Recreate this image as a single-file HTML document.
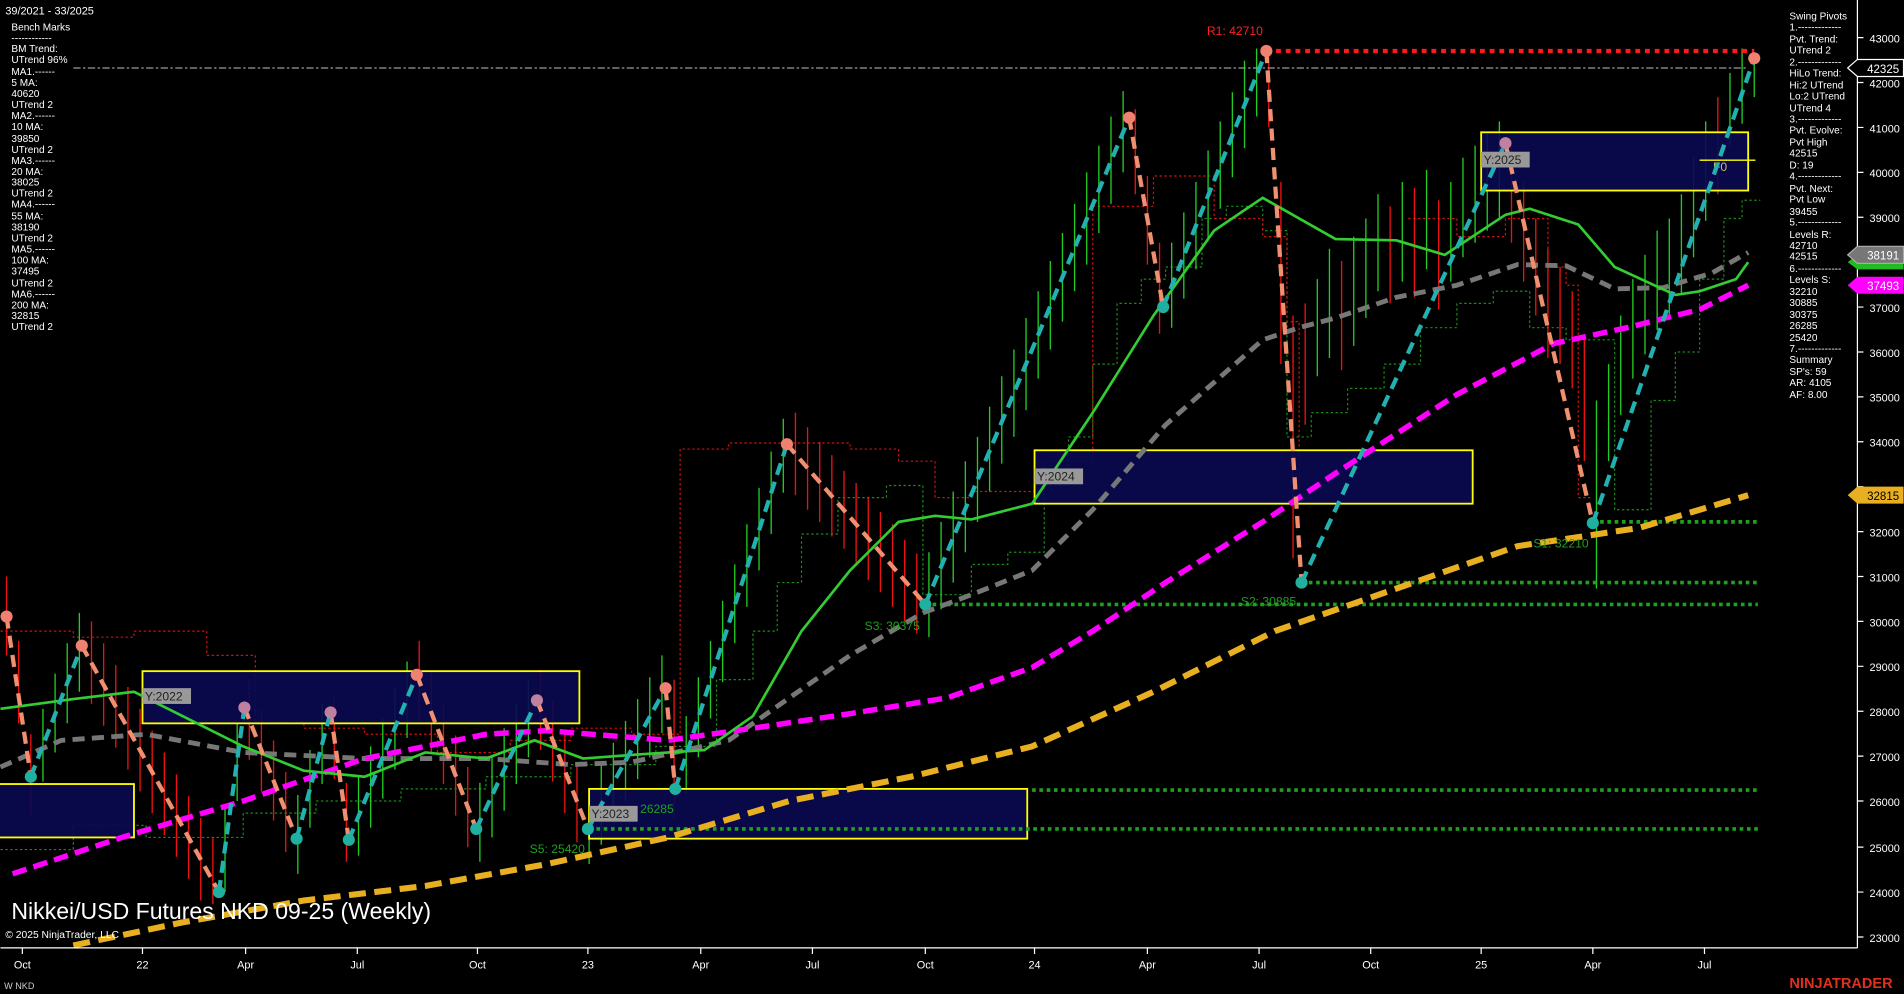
<!DOCTYPE html>
<html><head><meta charset="utf-8"><style>
html,body{margin:0;padding:0;background:#000;width:1904px;height:994px;overflow:hidden}
svg{display:block}
text{font-family:"Liberation Sans",Arial,sans-serif}
</style></head><body>
<svg width="1904" height="994" viewBox="0 0 1568 819" xmlns="http://www.w3.org/2000/svg">
<rect width="1568" height="819" fill="#000"/>
<!-- trailing stops -->
<g fill="none" stroke-width="1" stroke-dasharray="2 2">
<path d="M0 700 H60 V680 H120 V690 H200 V670 H260 V660 H330 V650 H400 V640 H470 V630 H540 V615 H590 V560 H620 V520 H640 V480 H660 V440 H690 V410 H730 V400 H760 V490 H800 V465 H830 V455 H860 V400 H880 V360 H900 V300 H920 V250 H940 V230 H960 V220 H990 V180 H1010 V170 H1040 V190 H1060 V360 H1080 V340 H1110 V320 H1140 V300 H1170 V270 H1200 V250 H1230 V240 H1260 V270 H1290 V280 H1330 V420 H1360 V330 H1380 V290 H1400 V230 H1420 V180 H1435 V165 H1450" stroke="#1a8a1a"/>
<path d="M0 520 H60 V525 H110 V520 H170 V540 H210 V595 H250 V600 H300 V605 H360 V620 H420 V610 H470 V600 H520 V605 H560 V370 H600 V365 H700 V370 H740 V380 H770 V410 H800 V405 H860 V380 H900 V170 H950 V145 H1000 V180 H1040 V195 H1060 V265 H1070 V410 H1080 V410 M1160 180 H1200 V195 H1240 V180 H1275 V220 H1290 V235 H1300 V410 H1310" stroke="#cc1111"/>
</g>
<!-- bars -->
<path stroke="#22cc22" stroke-width="1.1" fill="none" d="M35 584V644 M45 555V620 M55 530V596 M65 505V570 M185 665V735 M195 595V660 M245 655V720 M255 618V682 M265 580V646 M295 640V705 M305 615V682 M315 592V658 M325 566V634 M335 545V608 M395 645V710 M405 622V690 M415 600V668 M425 580V646 M435 560V624 M485 650V712 M495 630V696 M505 612V678 M515 594V660 M525 576V642 M535 558V624 M545 540V604 M565 590V654 M575 558V624 M585 528V592 M595 495V562 M605 465V530 M615 432V500 M625 402V470 M635 372V440 M645 345V406 M765 455V525 M775 430V502 M785 405V480 M795 380V455 M805 360V430 M815 335V405 M825 310V382 M835 288V360 M845 262V338 M855 240V312 M865 215V288 M875 192V265 M885 168V240 M895 142V218 M905 120V192 M915 96V168 M925 75V142 M965 200V270 M975 175V246 M985 150V222 M995 124V198 M1005 100V172 M1015 76V146 M1025 50V122 M1035 40V96 M1085 230V310 M1095 205V295 M1115 195V285 M1125 180V262 M1135 160V240 M1155 150V232 M1175 140V222 M1195 150V232 M1205 130V212 M1215 120V200 M1225 110V190 M1235 100V180 M1315 330V485 M1325 300V380 M1335 260V342 M1345 230V312 M1355 210V292 M1365 190V272 M1375 180V262 M1385 160V242 M1395 130V212 M1405 100V182 M1425 60V120 M1435 40V102 M1445 50V80"/>
<path stroke="#ee1111" stroke-width="1.1" fill="none" d="M5 475V540 M15 528V596 M25 605V672 M75 512V580 M85 530V598 M95 548V616 M105 566V634 M115 584V652 M125 602V670 M135 620V688 M145 638V706 M155 656V724 M165 674V742 M175 690V745 M205 560V626 M215 585V652 M225 610V676 M235 636V702 M275 575V642 M285 645V710 M345 528V594 M355 554V620 M365 580V646 M375 606V672 M385 632V698 M445 552V618 M455 578V644 M465 602V670 M475 628V694 M555 560V675 M655 340V408 M665 352V420 M675 364V430 M685 375V442 M695 388V452 M705 398V466 M715 410V478 M725 422V488 M735 432V500 M745 445V512 M755 456V522 M935 90V160 M945 145V218 M955 200V275 M1045 40V105 M1055 150V300 M1065 260V460 M1075 250V350 M1105 215V305 M1145 170V250 M1165 155V245 M1185 165V255 M1245 120V200 M1255 150V232 M1265 180V260 M1275 205V295 M1285 220V300 M1295 240V320 M1305 280V380 M1415 80V160"/>
<!-- boxes -->
<g fill="#0a0a50" fill-opacity="0.92" stroke="#ffff00" stroke-width="1.5">
<rect x="-2" y="646" width="112" height="44"/>
<rect x="117" y="553" width="360" height="43"/>
<rect x="485" y="650" width="361" height="41"/>
<rect x="852" y="371" width="361" height="44"/>
<rect x="1220" y="109" width="220" height="48"/>
</g>
<line x1="1400" y1="132" x2="1446" y2="132" stroke="#ffff00" stroke-width="1.2"/>
<text x="1411" y="141" fill="#c8c060" font-size="10">F0</text>
<!-- levels -->
<g stroke="#1fa01f" stroke-width="3" stroke-dasharray="3 3">
<line x1="1312" y1="430" x2="1448" y2="430"/>
<line x1="1072" y1="480" x2="1448" y2="480"/>
<line x1="762" y1="498" x2="1448" y2="498"/>
<line x1="850" y1="651" x2="1448" y2="651"/>
<line x1="485" y1="683" x2="1448" y2="683"/>
</g>
<line x1="1043" y1="42" x2="1445" y2="42" stroke="#ff1a1a" stroke-width="3.5" stroke-dasharray="4 4"/>
<line x1="60" y1="56" x2="1440" y2="56" stroke="#999" stroke-width="1" stroke-dasharray="6 2 2 2"/>
<!-- MAs -->
<g fill="none">
<polyline stroke="#777" stroke-width="4" stroke-dasharray="10 6" points="0,632 50,610 120,605 200,620 300,625 400,625 470,630 520,628 600,610 650,575 700,540 760,505 800,490 850,470 900,420 960,350 1040,280 1070,270 1100,262 1150,245 1200,235 1250,218 1290,219 1330,238 1370,237 1410,225 1440,208"/>
<polyline stroke="#ff00ff" stroke-width="4.5" stroke-dasharray="12 6" points="10,720 100,690 200,660 300,625 400,605 450,602 550,610 620,600 700,588 780,575 850,550 900,520 960,480 1040,430 1100,390 1200,325 1280,283 1340,270 1400,255 1440,235"/>
<polyline stroke="#e8b020" stroke-width="5" stroke-dasharray="14 7" points="60,779 150,760 250,742 350,730 450,712 550,690 650,660 750,640 850,615 950,570 1050,520 1150,485 1250,450 1350,435 1440,408"/>
<polyline stroke="#33cc33" stroke-width="2.2" points="0,584 60,576 110,570 150,590 200,615 250,635 300,640 350,620 400,625 440,610 480,625 520,622 580,618 620,590 660,520 700,470 740,430 770,425 800,428 850,415 900,340 950,260 1000,190 1040,163 1070,180 1100,197 1150,198 1190,210 1240,177 1260,172 1300,185 1330,220 1380,243 1400,240 1430,230 1440,216"/>
</g>
<!-- swing lines -->
<g stroke-width="3.5" stroke-dasharray="10 6">
<g stroke="#f09070">
<line x1="5" y1="508" x2="25" y2="640"/><line x1="67" y1="532" x2="180" y2="735"/><line x1="201" y1="583" x2="244" y2="691"/><line x1="272" y1="587" x2="287" y2="692"/><line x1="343" y1="556" x2="392" y2="683"/><line x1="442" y1="577" x2="484" y2="683"/><line x1="548" y1="567" x2="556" y2="650"/><line x1="648" y1="366" x2="762" y2="498"/><line x1="930" y1="97" x2="958" y2="253"/><line x1="1043" y1="42" x2="1072" y2="480"/><line x1="1240" y1="118" x2="1312" y2="431"/>
</g>
<g stroke="#22b0b0">
<line x1="25" y1="640" x2="67" y2="532"/><line x1="180" y1="735" x2="201" y2="583"/><line x1="244" y1="691" x2="272" y2="587"/><line x1="287" y1="692" x2="343" y2="556"/><line x1="392" y1="683" x2="442" y2="577"/><line x1="484" y1="683" x2="548" y2="567"/><line x1="556" y1="650" x2="648" y2="366"/><line x1="762" y1="498" x2="930" y2="97"/><line x1="958" y1="253" x2="1043" y2="42"/><line x1="1072" y1="480" x2="1240" y2="118"/><line x1="1312" y1="431" x2="1445" y2="48"/>
</g>
</g>
<g fill="#f08070"><circle cx="5" cy="508" r="5"/><circle cx="67" cy="532" r="5"/><circle cx="548" cy="567" r="5"/><circle cx="648" cy="366" r="5"/><circle cx="930" cy="97" r="5"/><circle cx="1043" cy="42" r="5"/><circle cx="1445" cy="48" r="5"/><circle cx="343" cy="556" r="5"/></g>
<g fill="#c080a0"><circle cx="201" cy="583" r="5"/><circle cx="272" cy="587" r="5"/><circle cx="442" cy="577" r="5"/><circle cx="1240" cy="118" r="5"/></g>
<g fill="#20b0a0"><circle cx="25" cy="640" r="5"/><circle cx="180" cy="735" r="5"/><circle cx="244" cy="691" r="5"/><circle cx="287" cy="692" r="5"/><circle cx="392" cy="683" r="5"/><circle cx="484" cy="683" r="5"/><circle cx="556" cy="650" r="5"/><circle cx="762" cy="498" r="5"/><circle cx="958" cy="253" r="5"/><circle cx="1072" cy="480" r="5"/><circle cx="1312" cy="431" r="5"/></g>
<g font-size="10">
<text x="994" y="29" fill="#ff2020">R1: 42710</text>
<text x="712" y="519" fill="#1fa01f">S3: 30375</text>
<text x="1022" y="499" fill="#1fa01f">S2: 30885</text>
<text x="1263" y="451" fill="#1fa01f">S1: 32210</text>
<text x="436" y="703" fill="#1fa01f">S5: 25420</text>
<text x="527" y="670" fill="#1fa01f">26285</text>
</g>
<g font-size="10" fill="#222" font-family="Liberation Mono">
<rect x="117" y="567" width="40" height="13" fill="#999"/><text x="119" y="577">Y:2022</text>
<rect x="485" y="664" width="40" height="13" fill="#999"/><text x="487" y="674">Y:2023</text>
<rect x="852" y="386" width="40" height="13" fill="#999"/><text x="854" y="396">Y:2024</text>
<rect x="1220" y="125" width="40" height="13" fill="#999"/><text x="1222" y="135">Y:2025</text>
</g>
<!-- left text -->
<text x="4" y="12" fill="#fff" font-size="9">39/2021 - 33/2025</text>
<g fill="#fff" font-size="8.3">
<text x="9" y="25">Bench Marks</text><text x="9" y="34">------------</text><text x="9" y="43">BM Trend:</text><text x="9" y="52">UTrend 96%</text><text x="9" y="62">MA1.------</text><text x="9" y="71">5 MA:</text><text x="9" y="80">40620</text><text x="9" y="89">UTrend 2</text><text x="9" y="98">MA2.------</text><text x="9" y="107">10 MA:</text><text x="9" y="117">39850</text><text x="9" y="126">UTrend 2</text><text x="9" y="135">MA3.------</text><text x="9" y="144">20 MA:</text><text x="9" y="153">38025</text><text x="9" y="162">UTrend 2</text><text x="9" y="171">MA4.------</text><text x="9" y="181">55 MA:</text><text x="9" y="190">38190</text><text x="9" y="199">UTrend 2</text><text x="9" y="208">MA5.------</text><text x="9" y="217">100 MA:</text><text x="9" y="226">37495</text><text x="9" y="236">UTrend 2</text><text x="9" y="245">MA6.------</text><text x="9" y="254">200 MA:</text><text x="9" y="263">32815</text><text x="9" y="272">UTrend 2</text>
</g>
<text x="9" y="757" fill="#fff" font-size="19">Nikkei/USD Futures NKD 09-25 (Weekly)</text>
<text x="4" y="773" fill="#fff" font-size="8.5">© 2025 NinjaTrader, LLC</text>
<text x="3" y="815" fill="#ccc" font-size="7.5">W NKD</text>
<text x="1474" y="814" fill="#e0301e" font-size="12" font-weight="bold">NINJATRADER</text>
<!-- axes -->
<line x1="1530" y1="0" x2="1530" y2="781" stroke="#fff"/>
<line x1="0" y1="781" x2="1530" y2="781" stroke="#fff"/>
<g stroke="#fff">
<path d="M1530 31H1535M1530 68H1535M1530 105H1535M1530 142H1535M1530 179H1535M1530 216H1535M1530 253H1535M1530 290H1535M1530 327H1535M1530 364H1535M1530 401H1535M1530 438H1535M1530 475H1535M1530 512H1535M1530 549H1535M1530 586H1535M1530 623H1535M1530 660H1535M1530 698H1535M1530 735H1535M1530 772H1535"/>
<path d="M18 781V786M117 781V786M202 781V786M294 781V786M393 781V786M484 781V786M577 781V786M669 781V786M762 781V786M852 781V786M945 781V786M1037 781V786M1129 781V786M1220 781V786M1312 781V786M1404 781V786"/>
</g>
<g fill="#fff" font-size="9">
<text x="1540" y="35">43000</text><text x="1540" y="72">42000</text><text x="1540" y="109">41000</text><text x="1540" y="146">40000</text><text x="1540" y="183">39000</text><text x="1540" y="257">37000</text><text x="1540" y="294">36000</text><text x="1540" y="331">35000</text><text x="1540" y="368">34000</text><text x="1540" y="442">32000</text><text x="1540" y="479">31000</text><text x="1540" y="516">30000</text><text x="1540" y="553">29000</text><text x="1540" y="590">28000</text><text x="1540" y="627">27000</text><text x="1540" y="664">26000</text><text x="1540" y="702">25000</text><text x="1540" y="739">24000</text><text x="1540" y="776">23000</text>
</g>
<g fill="#fff" font-size="9" text-anchor="middle">
<text x="18" y="798">Oct</text><text x="117" y="798">22</text><text x="202" y="798">Apr</text><text x="294" y="798">Jul</text><text x="393" y="798">Oct</text><text x="484" y="798">23</text><text x="577" y="798">Apr</text><text x="669" y="798">Jul</text><text x="762" y="798">Oct</text><text x="852" y="798">24</text><text x="945" y="798">Apr</text><text x="1037" y="798">Jul</text><text x="1129" y="798">Oct</text><text x="1220" y="798">25</text><text x="1312" y="798">Apr</text><text x="1404" y="798">Jul</text>
</g>
<!-- right panel -->
<g fill="#fff" font-size="8.3">
<text x="1474" y="16">Swing Pivots</text><text x="1474" y="25">1.-------------</text><text x="1474" y="35">Pvt. Trend:</text><text x="1474" y="44">UTrend 2</text><text x="1474" y="54">2.-------------</text><text x="1474" y="63">HiLo Trend:</text><text x="1474" y="73">Hi:2 UTrend</text><text x="1474" y="82">Lo:2 UTrend</text><text x="1474" y="92">UTrend 4</text><text x="1474" y="101">3.-------------</text><text x="1474" y="110">Pvt. Evolve:</text><text x="1474" y="120">Pvt High</text><text x="1474" y="129">42515</text><text x="1474" y="139">D: 19</text><text x="1474" y="148">4.-------------</text><text x="1474" y="158">Pvt. Next:</text><text x="1474" y="167">Pvt Low</text><text x="1474" y="177">39455</text><text x="1474" y="186">5.-------------</text><text x="1474" y="196">Levels R:</text><text x="1474" y="205">42710</text><text x="1474" y="214">42515</text><text x="1474" y="224">6.-------------</text><text x="1474" y="233">Levels S:</text><text x="1474" y="243">32210</text><text x="1474" y="252">30885</text><text x="1474" y="262">30375</text><text x="1474" y="271">26285</text><text x="1474" y="281">25420</text><text x="1474" y="290">7.-------------</text><text x="1474" y="299">Summary</text><text x="1474" y="309">SP's: 59</text><text x="1474" y="318">AR: 4105</text><text x="1474" y="328">AF: 8.00</text>
</g>
<g font-size="9.5">
<polygon points="1522,56 1530,49 1568,49 1568,63 1530,63" fill="#000" stroke="#fff"/><text x="1538" y="60" fill="#fff">42325</text>
<polygon points="1522,216 1530,210 1568,210 1568,222 1530,222" fill="#22bb22"/>
<polygon points="1522,210 1530,203 1568,203 1568,217 1530,217" fill="#777" stroke="#aaa"/><text x="1538" y="214" fill="#fff">38191</text>
<polygon points="1522,235 1530,228 1568,228 1568,242 1530,242" fill="#ff00ff"/><text x="1538" y="239" fill="#fff">37493</text>
<polygon points="1522,408 1530,401 1568,401 1568,415 1530,415" fill="#e8b020"/><text x="1538" y="412" fill="#000">32815</text>
</g>
</svg>
</body></html>
